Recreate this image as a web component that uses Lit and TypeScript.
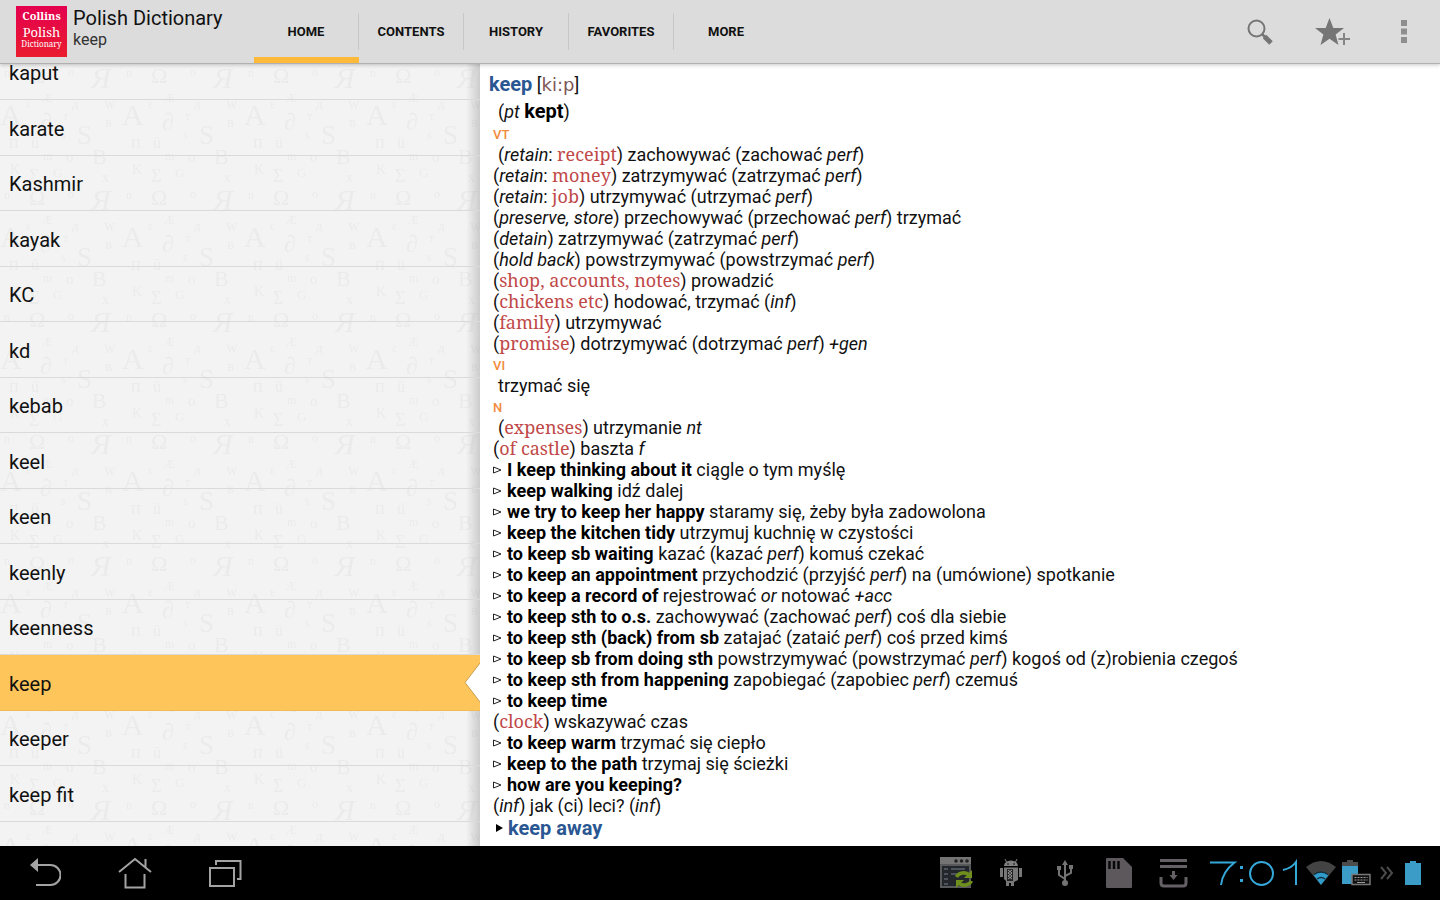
import { LitElement, html, svg, css } from "lit";
import { customElement, property, query } from "lit/decorators.js";
import { classMap } from "lit/directives/class-map.js";

type Glyph = [string, number, number, number];

/* Letters of one wallpaper tile: text, x, baseline y, size. */
const TILE: Glyph[] = [
  ["Ω", 29, 19, 22], ["Я", 91, 24, 30], ["n", 4, 13, 12], ["o", 68, 12, 12], 
  ["Æ", 42, 38, 12], ["д", 72, 44, 13], ["w", 104, 45, 16], ["ε", 26, 44, 12],
  ["A", 0, 61, 30], ["∂", 40, 66, 24], ["т", 63, 56, 12], ["в", 105, 63, 15],
  ["S", 77, 80, 27], ["s", 61, 75, 12], ["ü", 31, 84, 16], ["п", 9, 84, 18],
  ["m", 43, 96, 12], ["o", 66, 98, 15], ["B", 92, 100, 22],
  ["K", 10, 110, 14], ["Σ", 29, 118, 18], ["G", 53, 113, 13], ["x", 102, 118, 14],
];

const TILE_SIZE = 122;

@customElement("letter-wallpaper")
class LetterWallpaper extends LitElement {
  static styles = css`
    :host { display: block; pointer-events: none; }
    .art { display: block; width: 100%; height: 100%; }
    .glyph { font-family: "Liberation Serif", serif; fill: #ebebeb; }
    .slant { font-style: italic; }
  `;
  render() {
    return html`<svg class="art" aria-hidden="true">
      <defs>
        <pattern id="tile" x="0" y="0" width=${TILE_SIZE} height=${TILE_SIZE} patternUnits="userSpaceOnUse">
          ${TILE.map(([t, x, y, s]) => svg`<text class=${t === "Я" ? "glyph slant" : "glyph"} x=${x} y=${y} font-size=${s}>${t}</text>`)}
        </pattern>
      </defs>
      <rect width="100%" height="100%" fill="url(#tile)"></rect>
    </svg>`;
  }
}

@customElement("title-bar")
class TitleBar extends LitElement {
  @property() word = "";
  static styles = css`
    :host {
      display: flex; height: 63px; background: #dcdcdc; border-bottom: 1px solid #b0b0b0;
      box-shadow: 0 1px 4px rgba(0, 0, 0, 0.22); position: relative; z-index: 3;
      font-family: Roboto, sans-serif; color: #111;
    }
    .brand { display: flex; flex: 0 0 auto; width: 238px; padding: 6px 0 0 16px; gap: 6px; }
    .logo {
      width: 51px; height: 51px; background: linear-gradient(#e4004f, #ea1c2e); color: #fff;
      font-family: "Noto Serif", "DejaVu Serif", serif; text-align: center; box-sizing: border-box;
      display: flex; flex-direction: column;
    }
    .l1 { font-size: 11px; line-height: 20px; font-weight: 700; }
    .l2 { font-size: 13px; line-height: 13px; }
    .l3 { font-size: 8px; line-height: 10px; }
    .names { display: flex; flex-direction: column; white-space: nowrap; }
    .app { font-size: 20px; line-height: 24px; margin: 0; font-weight: 400; }
    .sub { font-size: 16px; line-height: 20px; color: #333; }
    .tabs { display: flex; flex: 1; }
    .tab {
      width: 105px; border: 0; background: none; padding: 6px 0 0; font: 700 13px/18px Roboto, sans-serif;
      color: #111; border-bottom: 6px solid transparent; display: flex; align-items: center;
    }
    .tab span { flex: 1; line-height: 37px; border-right: 1px solid #c8c8c8; }
    .tab.on { border-bottom-color: #fdb93a; }
    .tab:last-child span { border-right-color: transparent; }
    .actions { display: flex; align-items: center; }
    .act { border: 0; background: none; padding: 0; width: 72px; height: 63px; display: flex; align-items: center; justify-content: center; }
  `;
  render() {
    const tabs = ["HOME", "CONTENTS", "HISTORY", "FAVORITES", "MORE"];
    return html`
      <div class="brand">
        <div class="logo"><span class="l1">Collins</span><span class="l2">Polish</span><span class="l3">Dictionary</span></div>
        <div class="names"><h1 class="app">Polish Dictionary</h1><span class="sub">${this.word}</span></div>
      </div>
      <nav class="tabs">
        ${tabs.map((t, i) => html`<button class=${classMap({ tab: true, on: i === 0 })}><span>${t}</span></button>`)}
      </nav>
      <div class="actions">
        <button class="act" aria-label="Search">
          <svg width="28" height="28" viewBox="0 0 28 28" fill="none" stroke="#757575">
            <circle cx="10.500" cy="10.500" r="8" stroke-width="2"></circle>
            <path d="M16 16l3 3" stroke-width="2.500"></path>
            <path d="M18.500 18.500l6.500 6.500" stroke-width="5"></path>
          </svg>
        </button>
        <button class="act" aria-label="Add to favorites">
          <svg width="36" height="30" viewBox="0 0 36 30">
            <path fill="#757575" d="M15.500 1l3.800 10H30l-8.400 6.600 2.900 10.400-9-6.200-9 6.200 2.900-10.400L1 11h10.700z"></path>
            <path fill="none" stroke="#dcdcdc" stroke-width="5" d="M30 15v14M24 22h13"></path>
            <path fill="none" stroke="#858585" stroke-width="2" d="M30 16v12M24.500 22h11.500"></path>
          </svg>
        </button>
        <button class="act" aria-label="More options">
          <svg width="6" height="23" viewBox="0 0 6 23" fill="#8e8e8e"><path d="M0 0h6v6H0zM0 8.500h6v6H0zM0 17h6v6H0z"></path></svg>
        </button>
      </div>`;
  }
}

@customElement("word-list")
class WordList extends LitElement {
  @property({ attribute: false }) words: string[] = [];
  @property() current = "";
  @query(".scroller") scroller!: HTMLElement;
  static styles = css`
    :host { display: block; position: relative; background: #f3f3f3; overflow: hidden; font-family: Roboto, sans-serif; }
    .paper { position: absolute; inset: 0; }
    .shade { position: absolute; inset: 0 0 0 auto; width: 14px; background: linear-gradient(90deg, transparent, rgba(0, 0, 0, 0.16)); pointer-events: none; }
    .scroller { position: relative; height: 100%; overflow-y: auto; scrollbar-width: none; }
    .rows { list-style: none; margin: 0; padding: 0 0 24px; }
    .row { height: 55px; box-sizing: border-box; border-bottom: 1px solid #dadada; position: relative; }
    .row:nth-child(even) { height: 56px; }
    .word { display: flex; align-items: center; height: 100%; padding: 2px 9px 0; font-size: 20px; color: #111; text-decoration: none; box-sizing: border-box; }
    .row.on { background: #fec65a; border-bottom-color: #efbb57; }
    .notch { position: absolute; right: 0; top: 8px; z-index: 2; display: block; }
  `;
  firstUpdated() {
    this.scroller.scrollTop = 19;
  }
  render() {
    return html`
      <letter-wallpaper class="paper"></letter-wallpaper>
      <div class="shade"></div>
      <div class="scroller">
        <ul class="rows">
          ${this.words.map((w) => {
            const on = w === this.current;
            return html`<li class=${classMap({ row: true, on })}>
              <a class="word" href="#${w}">${w}</a>
              ${on ? html`<svg class="notch" width="16" height="40" viewBox="0 0 16 40"><path d="M16 0L1 19.500 16 39z" fill="#fff"></path><path d="M16 0L1 19.500 16 39" fill="none" stroke="#c99c4b" stroke-width="1"></path></svg>` : ""}
            </li>`;
          })}
        </ul>
      </div>`;
  }
}

/* Entry markup: *bold*, _italic_, {subject}; a leading > marks an example. */
const LINES_VT = [
  "(_retain_: {receipt}) zachowywać (zachować _perf_)",
  "(_retain_: {money}) zatrzymywać (zatrzymać _perf_)",
  "(_retain_: {job}) utrzymywać (utrzymać _perf_)",
  "(_preserve, store_) przechowywać (przechować _perf_) trzymać",
  "(_detain_) zatrzymywać (zatrzymać _perf_)",
  "(_hold back_) powstrzymywać (powstrzymać _perf_)",
  "({shop, accounts, notes}) prowadzić",
  "({chickens etc}) hodować, trzymać (_inf_)",
  "({family}) utrzymywać",
  "({promise}) dotrzymywać (dotrzymać _perf_) _+gen_",
];
const LINES_N = [
  "({expenses}) utrzymanie _nt_",
  "({of castle}) baszta _f_",
  ">*I keep thinking about it* ciągle o tym myślę",
  ">*keep walking* idź dalej",
  ">*we try to keep her happy* staramy się, żeby była zadowolona",
  ">*keep the kitchen tidy* utrzymuj kuchnię w czystości",
  ">*to keep sb waiting* kazać (kazać _perf_) komuś czekać",
  ">*to keep an appointment* przychodzić (przyjść _perf_) na (umówione) spotkanie",
  ">*to keep a record of* rejestrować _or_ notować _+acc_",
  ">*to keep sth to o.s.* zachowywać (zachować _perf_) coś dla siebie",
  ">*to keep sth (back) from sb* zatajać (zataić _perf_) coś przed kimś",
  ">*to keep sb from doing sth* powstrzymywać (powstrzymać _perf_) kogoś od (z)robienia czegoś",
  ">*to keep sth from happening* zapobiegać (zapobiec _perf_) czemuś",
  ">*to keep time*",
  "({clock}) wskazywać czas",
  ">*to keep warm* trzymać się ciepło",
  ">*keep to the path* trzymaj się ścieżki",
  ">*how are you keeping?*",
  "(_inf_) jak (ci) leci? (_inf_)",
];
const SECTIONS = [
  { label: "VT", lines: LINES_VT },
  { label: "VI", lines: ["trzymać się"] },
  { label: "N", lines: LINES_N },
];

function rich(text: string) {
  return text.split(/(\*[^*]+\*|_[^_]+_|\{[^}]+\})/).map((part) => {
    const inner = part.slice(1, -1);
    if (part[0] === "*") return html`<b>${inner}</b>`;
    if (part[0] === "_") return html`<i>${inner}</i>`;
    if (part[0] === "{") return html`<span class="subj">${inner}</span>`;
    return part;
  });
}

@customElement("dictionary-entry")
class DictionaryEntry extends LitElement {
  static styles = css`
    :host { display: block; background: #fff; overflow: hidden; font: 18px/21px Roboto, sans-serif; color: #111; box-sizing: border-box; padding: 5px 9px 0; }
    .head { font-size: 18px; line-height: 30px; margin: 0; font-weight: 400; }
    .term { font-size: 20px; font-weight: 700; color: #2a5792; }
    .ipa { font-family: "DejaVu Sans", sans-serif; color: #7d5656; }
    .form { margin: 0; padding-left: 9px; line-height: 23px; }
    .form b { font-size: 20px; }
    .part { margin: 0; padding: 2px 0 0 4px; font-size: 13px; font-weight: 500; line-height: 19px; color: #f28b3c; }
    .line { margin: 0; padding-left: 4px; line-height: 21px; }
    .line.first { padding-left: 9px; }
    .subj { font-family: "Noto Serif", "DejaVu Serif", serif; font-size: 18px; line-height: 1px; color: #c04848; }
    .tri { display: inline-block; width: 9px; height: 8px; margin-right: 5px; vertical-align: 2px; }
    b { font-weight: 700; color: #000; }
    .more { display: flex; align-items: center; gap: 5px; padding-left: 7px; line-height: 24px; font-size: 20px; font-weight: 700; color: #2a5792; text-decoration: none; }
  `;
  render() {
    return html`
      <h2 class="head"><span class="term">keep</span> [<span class="ipa">ki:p</span>]</h2>
      <p class="form">(<i>pt</i> <b>kept</b>)</p>
      ${SECTIONS.map((s) => html`
        <h3 class="part">${s.label}</h3>
        ${s.lines.map((l, i) => {
          const ex = l[0] === ">";
          return html`<p class=${classMap({ line: true, first: i === 0 })}>${ex ? html`<svg class="tri" viewBox="0 0 9 8"><path d="M.500 1L8 4 .500 7z" fill="none" stroke="#222"></path></svg>` : ""}${rich(ex ? l.slice(1) : l)}</p>`;
        })}`)}
      <a class="more" href="#keep-away"><svg width="7" height="8" viewBox="0 0 7 8"><path d="M0 0L7 4 0 8z" fill="#000"></path></svg>keep away</a>`;
  }
}

@customElement("system-bar")
class SystemBar extends LitElement {
  static styles = css`
    :host { display: flex; justify-content: space-between; align-items: center; height: 54px; background: #000; }
    .group { display: flex; align-items: center; }
    .key { border: 0; background: none; padding: 0; width: 90px; height: 54px; display: flex; align-items: center; justify-content: center; }
    .notes { gap: 18px; padding-right: 17px; }
    .status { padding-right: 14px; gap: 6px; }
    svg { display: block; }
  `;
  render() {
    return html`
      <div class="group">
        <button class="key" aria-label="Back">
          <svg width="32" height="30" viewBox="0 0 32 30"><path d="M8 7h13.500a9.800 9.800 0 0 1 0 20H7" fill="none" stroke="#a3a3a3" stroke-width="2"></path><path d="M1 7L9 0v14z" fill="#a3a3a3"></path></svg>
        </button>
        <button class="key" aria-label="Home">
          <svg width="34" height="32" viewBox="0 0 34 32" fill="none" stroke="#a3a3a3" stroke-width="2"><path d="M1 15L17 2l16 13M7.500 17v13.500h19V17M27.500 10V2"></path></svg>
        </button>
        <button class="key" aria-label="Recent apps">
          <svg width="34" height="30" viewBox="0 0 34 30" fill="none" stroke="#a3a3a3" stroke-width="2"><path d="M2 10h24v18H2z"></path><path d="M8 7V3h24.500v18H29"></path></svg>
        </button>
      </div>
      <div class="group">
        <div class="group notes">
          <svg width="36" height="34" viewBox="0 0 36 34">
            <path d="M1 1h31v31H1z" fill="#58595b"></path><path d="M3 10h27v20H3z" fill="#23262b"></path>
            <path d="M1 1h31v7H1z" fill="#747474"></path>
            <g fill="#222"><circle cx="17" cy="5" r="1.800"></circle><circle cx="22.500" cy="5" r="1.800"></circle><circle cx="28" cy="5" r="1.800"></circle></g>
            <g stroke="#4d535c" stroke-width="2"><path d="M5 13h4M5 18h4M5 23h4M5 28h4M12 13h14M12 18h6"></path></g>
            <g fill="none" stroke="#6f8f1c" stroke-width="3.500"><path d="M17.500 21a8 7 0 0 1 13-2"></path><path d="M32.500 25a8 7 0 0 1-13 2"></path></g>
            <path d="M33 14v8h-8zM17 32v-8h8z" fill="#6f8f1c"></path>
          </svg>
          <svg width="36" height="34" viewBox="0 0 36 34">
            <path d="M12 3l2 4M24 3l-2 4" stroke="#808080"></path>
            <path d="M11 10a7 5.500 0 0 1 14 0z" fill="#808080"></path>
            <path d="M7 12h3v9H7zM26 12h3v9h-3zM11 11.500h14V24l-4 2v4h-3v-3l-2 0v3h-3v-5l-2-2z" fill="#777"></path>
            <path d="M14 13h6v12h-6z" fill="#222"></path>
            <path d="M15 14l4 3-4 3 4 3M19 14l-4 3 4 3-4 3" stroke="#999" fill="none"></path>
            <circle cx="15" cy="8" r=".8"></circle><circle cx="21" cy="8" r=".8"></circle>
          </svg>
          <svg width="36" height="34" viewBox="0 0 36 34" fill="none" stroke="#737373" stroke-width="2">
            <path d="M18 7v20M18 23l-6-4v-6M18 20l6-3v-6"></path>
            <path d="M18 4l3 5h-6zM10 10h4v4h-4zM22 9h4v4h-4z" fill="#737373" stroke="none"></path>
            <circle cx="18" cy="27" r="3" fill="#737373" stroke="none"></circle>
          </svg>
          <svg width="36" height="34" viewBox="0 0 36 34">
            <path d="M6 2h16l9 9v20q0 1-1 1H6q-1 0-1-1V3q0-1 1-1z" fill="#5d585b"></path>
            <path d="M8.500 5v8M13 5v8M17.500 5v8" stroke="#080808" stroke-width="2.500"></path>
          </svg>
          <svg width="36" height="34" viewBox="0 0 36 34" fill="none" stroke="#656065" stroke-width="3">
            <path d="M5 4.500h27M5 10.500h27"></path><path d="M6 21v6q0 3 3 3h19q3 0 3-3v-6"></path>
            <path d="M18.500 15v5" stroke-width="3"></path><path d="M14.500 19h8l-4 5z" fill="#656065" stroke="none"></path>
          </svg>
        </div>
        <div class="group status">
          <svg width="92" height="30" viewBox="0 0 92 30" role="img" aria-label="7:01" fill="none" stroke="#35a8da" stroke-width="2">
            <path d="M2 4.500h24.500C18 11 14 18 13 27"></path><path d="M33.500 8v3M33.500 21v3" stroke-width="3"></path>
            <ellipse cx="53.500" cy="15.500" rx="11.500" ry="11.500"></ellipse><path d="M75 12q9-2 13-8v23"></path>
          </svg>
          <svg width="30" height="26" viewBox="0 0 30 26"><path d="M0 7q15-12 30 0L15 25z" fill="#434343"></path><path d="M7.500 15q7.500-5.500 15 0L15 25z" fill="#2f9ccc"></path><path d="M8 14.500q7-5 14 0M11 19q4-3 8 0" fill="none" stroke="#12303d" stroke-width="1.500"></path></svg>
          <svg width="30" height="28" viewBox="0 0 30 28"><path d="M5 1h6v2h5v5H0V3h5z" fill="#4c4c4c"></path><path d="M0 7h16v18H0z" fill="#3b9cc7"></path><path d="M10 15.500h18v10H10z" fill="#111" stroke="#777" stroke-width="1.500"></path><path d="M12.500 18.500h13M12.500 21h13" stroke="#999" stroke-dasharray="2 1"></path><path d="M15 23.500h8" stroke="#999"></path></svg>
          <svg width="16" height="14" viewBox="0 0 16 14" fill="none" stroke="#4a4a4a" stroke-width="2"><path d="M3 1l5 6-5 6M9 1l5 6-5 6"></path></svg>
          <svg width="26" height="26" viewBox="0 0 26 26"><path d="M10 1h6v2h5v22H5V3h5z" fill="#3b9cc7"></path></svg>
        </div>
      </div>`;
  }
}

@customElement("app-root")
class AppRoot extends LitElement {
  static styles = css`
    :host { display: flex; flex-direction: column; height: 100vh; overflow: hidden; background: #fff; }
    .body { flex: 1; min-height: 0; display: grid; grid-template-columns: 1fr 2fr; }
  `;
  render() {
    const words = ["kaput", "karate", "Kashmir", "kayak", "KC", "kd", "kebab", "keel", "keen", "keenly", "keenness", "keep", "keeper", "keep fit"];
    return html`
      <title-bar word="keep"></title-bar>
      <main class="body">
        <word-list .words=${words} current="keep"></word-list>
        <dictionary-entry></dictionary-entry>
      </main>
      <system-bar></system-bar>`;
  }
}
